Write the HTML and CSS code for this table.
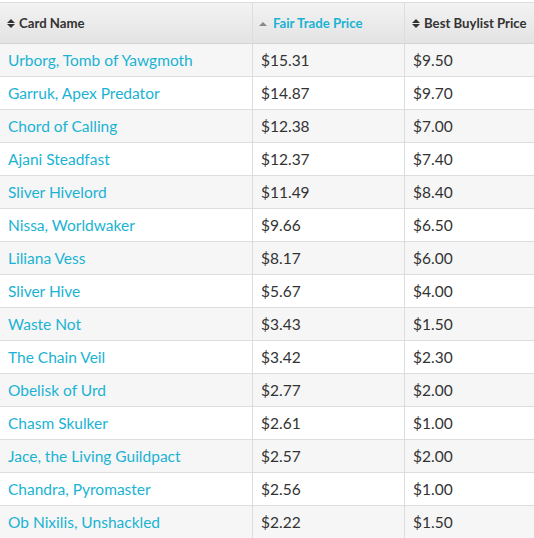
FILE: index.html
```html
<!DOCTYPE html>
<html lang="en">
<head>
<meta charset="utf-8">
<title>Card Prices</title>
<link rel="stylesheet" href="styles.css">
</head>
<body>
<table class="prices">
  <colgroup>
    <col class="c-name">
    <col class="c-fair">
    <col class="c-buy">
  </colgroup>
  <thead>
    <tr>
      <th><span class="sort-both"></span>Card Name</th>
      <th class="sorted"><span class="sort-up"></span>Fair Trade Price</th>
      <th><span class="sort-both"></span>Best Buylist Price</th>
    </tr>
  </thead>
  <tbody>
    <tr><td><a href="#">Urborg, Tomb of Yawgmoth</a></td><td>$15.31</td><td>$9.50</td></tr>
    <tr><td><a href="#">Garruk, Apex Predator</a></td><td>$14.87</td><td>$9.70</td></tr>
    <tr><td><a href="#">Chord of Calling</a></td><td>$12.38</td><td>$7.00</td></tr>
    <tr><td><a href="#">Ajani Steadfast</a></td><td>$12.37</td><td>$7.40</td></tr>
    <tr><td><a href="#">Sliver Hivelord</a></td><td>$11.49</td><td>$8.40</td></tr>
    <tr><td><a href="#">Nissa, Worldwaker</a></td><td>$9.66</td><td>$6.50</td></tr>
    <tr><td><a href="#">Liliana Vess</a></td><td>$8.17</td><td>$6.00</td></tr>
    <tr><td><a href="#">Sliver Hive</a></td><td>$5.67</td><td>$4.00</td></tr>
    <tr><td><a href="#">Waste Not</a></td><td>$3.43</td><td>$1.50</td></tr>
    <tr><td><a href="#">The Chain Veil</a></td><td>$3.42</td><td>$2.30</td></tr>
    <tr><td><a href="#">Obelisk of Urd</a></td><td>$2.77</td><td>$2.00</td></tr>
    <tr><td><a href="#">Chasm Skulker</a></td><td>$2.61</td><td>$1.00</td></tr>
    <tr><td><a href="#">Jace, the Living Guildpact</a></td><td>$2.57</td><td>$2.00</td></tr>
    <tr><td><a href="#">Chandra, Pyromaster</a></td><td>$2.56</td><td>$1.00</td></tr>
    <tr><td><a href="#">Ob Nixilis, Unshackled</a></td><td>$2.22</td><td>$1.50</td></tr>
  </tbody>
</table>
</body>
</html>
```

FILE: styles.css
```css
html, body {
  margin: 0;
  padding: 0;
  background: #ffffff;
}

body {
  padding-top: 2px;
  font-family: Lato, "Open Sans", "Liberation Sans", sans-serif;
  color: #333333;
}

.prices {
  border-collapse: separate;
  border-spacing: 0;
  table-layout: fixed;
  width: 540px;
}

.c-name { width: 253px; }
.c-fair { width: 152px; }
.c-buy { width: 135px; }

.prices th,
.prices td {
  border-right: 1px solid #dddddd;
  border-bottom: 1px solid #dddddd;
  text-align: left;
  white-space: nowrap;
  overflow: hidden;
}

.prices th {
  height: 40px;
  padding: 0 0 0 7px;
  border-top: 1px solid #dddddd;
  border-bottom-color: #d4d4d4;
  background: linear-gradient(to bottom, #f3f3f3 0%, #e3e3e3 100%);
  font-size: 13.2px;
  font-weight: 700;
  color: #333333;
  vertical-align: middle;
}

.prices th.sorted {
  color: #1ab3d3;
  padding-left: 6px;
}

.prices td {
  height: 32px;
  padding: 0 0 0 8px;
  font-size: 15.5px;
  vertical-align: middle;
}

.prices tbody tr:nth-child(odd) td {
  background: #f6f6f6;
}

.prices a {
  color: #1ab3d3;
  text-decoration: none;
}

.sort-both,
.sort-up {
  display: inline-block;
  position: relative;
  width: 8px;
  height: 10px;
  margin-right: 4px;
  vertical-align: -1px;
}

.sort-both::before,
.sort-both::after,
.sort-up::before {
  content: "";
  position: absolute;
  left: 0;
  width: 0;
  height: 0;
  border-left: 4px solid transparent;
  border-right: 4px solid transparent;
}

.sort-both::before {
  top: 0;
  border-bottom: 4px solid #333333;
}

.sort-both::after {
  top: 5px;
  border-top: 4px solid #333333;
}

.sort-up {
  margin-right: 6px;
}

.sort-up::before {
  top: 3px;
  border-bottom: 4px solid #888888;
}
```
